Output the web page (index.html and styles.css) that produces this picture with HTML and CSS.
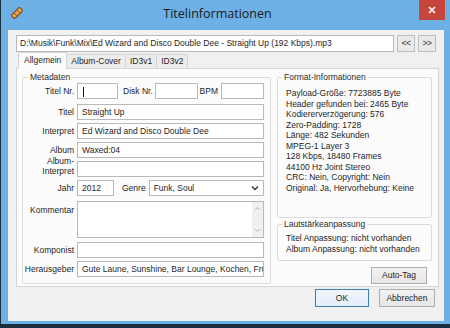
FILE: index.html
```html
<!DOCTYPE html>
<html lang="de">
<head>
    <meta charset="UTF-8">
    <title>Titelinformationen</title>
    <link rel="stylesheet" href="styles.css">
</head>
<body>

    <div class="window">
        <!-- Title bar -->
        <div class="titlebar">
            <svg class="app-icon" width="14" height="14" viewBox="0 0 14 14">
                <g transform="rotate(-45 7 7)">
                    <rect x="1" y="4.5" width="12" height="5" rx="1.5" fill="#f0a03c" stroke="#6b4a2a" stroke-width="1"/>
                    <line x1="5" y1="4.5" x2="5" y2="9.5" stroke="#6b4a2a" stroke-width="0.8"/>
                    <line x1="9" y1="4.5" x2="9" y2="9.5" stroke="#6b4a2a" stroke-width="0.8"/>
                </g>
            </svg>
            <div class="title">Titelinformationen</div>
            <div class="close-btn">
                <svg width="8" height="8" viewBox="0 0 8 8">
                    <path d="M1 1 L7 7 M7 1 L1 7" stroke="#fff" stroke-width="1.6"/>
                </svg>
            </div>
        </div>

        <!-- Client area -->
        <div class="client">
            <div class="path-row">
                <div class="field path">D:\Musik\Funk\Mix\Ed Wizard and Disco Double Dee - Straight Up (192 Kbps).mp3</div>
                <div class="nav-btn">&lt;&lt;</div>
                <div class="nav-btn">&gt;&gt;</div>
            </div>

            <div class="tabs">
                <div class="tab active">Allgemein</div>
                <div class="tab">Album-Cover</div>
                <div class="tab">ID3v1</div>
                <div class="tab">ID3v2</div>
            </div>

            <div class="tab-panel">
                <!-- Metadata -->
                <fieldset class="group meta">
                    <legend>Metadaten</legend>
                    <div class="form">
                        <div class="label">Titel Nr.</div>
                        <div class="row first">
                            <div class="field w-nr"><span class="caret"></span></div>
                            <div class="inline-label disk">Disk Nr.</div>
                            <div class="field w-small"></div>
                            <div class="inline-label bpm">BPM</div>
                            <div class="field w-small"></div>
                        </div>

                        <div class="label">Titel</div>
                        <div class="field">Straight Up</div>

                        <div class="label">Interpret</div>
                        <div class="field">Ed Wizard and Disco Double Dee</div>

                        <div class="label">Album</div>
                        <div class="field">Waxed:04</div>

                        <div class="label two-line">Album-<br>Interpret</div>
                        <div class="field"></div>

                        <div class="label">Jahr</div>
                        <div class="row">
                            <div class="field w-year">2012</div>
                            <div class="inline-label genre">Genre</div>
                            <div class="field select">
                                <span>Funk, Soul</span>
                                <svg width="8" height="6" viewBox="0 0 8 6">
                                    <path d="M1 1.5 L4 4.5 L7 1.5" fill="none" stroke="#333" stroke-width="1.4"/>
                                </svg>
                            </div>
                        </div>

                        <div class="label top">Kommentar</div>
                        <div class="field memo">
                            <div class="scrollbar">
                                <svg width="7" height="5" viewBox="0 0 7 5"><path d="M1 4 L3.5 1.5 L6 4" fill="none" stroke="#b5b5b5" stroke-width="1"/></svg>
                                <svg width="7" height="5" viewBox="0 0 7 5"><path d="M1 1 L3.5 3.5 L6 1" fill="none" stroke="#b5b5b5" stroke-width="1"/></svg>
                            </div>
                        </div>

                        <div class="label">Komponist</div>
                        <div class="field"></div>

                        <div class="label">Herausgeber</div>
                        <div class="field">Gute Laune, Sunshine, Bar Lounge, Kochen, Frühstück</div>
                    </div>
                </fieldset>

                <!-- Right column -->
                <div class="side">
                    <fieldset class="group format">
                        <legend>Format-Informationen</legend>
                        <div class="info">
                            <div>Payload-Größe: 7723885 Byte</div>
                            <div>Header gefunden bei: 2465 Byte</div>
                            <div>Kodiererverzögerung: 576</div>
                            <div>Zero-Padding: 1728</div>
                            <div>Länge: 482 Sekunden</div>
                            <div>MPEG-1 Layer 3</div>
                            <div>128 Kbps, 18480 Frames</div>
                            <div>44100 Hz Joint Stereo</div>
                            <div>CRC: Nein, Copyright: Nein</div>
                            <div>Original: Ja, Hervorhebung: Keine</div>
                        </div>
                    </fieldset>

                    <fieldset class="group gain">
                        <legend>Lautstärkeanpassung</legend>
                        <div class="info">
                            <div>Titel Anpassung: nicht vorhanden</div>
                            <div>Album Anpassung: nicht vorhanden</div>
                        </div>
                    </fieldset>

                    <div class="side-actions">
                        <div class="btn auto-tag">Auto-Tag</div>
                    </div>
                </div>
            </div>

            <div class="dialog-buttons">
                <div class="btn default">OK</div>
                <div class="btn">Abbrechen</div>
            </div>
        </div>
    </div>

</body>
</html>
```

FILE: styles.css
```css
/* General */
body {
    margin: 0;
    width: 450px;
    height: 328px;
    overflow: hidden;
    background: #1c2d40;
    font-family: "Liberation Sans", Arial, sans-serif;
    font-size: 8.5px;
    color: #1e1e1e;
}

.window {
    width: 449px;
    height: 324px;
    margin-left: 1px;
    padding: 0 6px 3px 7px;
    background: #6cb0e6;
    box-sizing: border-box;
}

/* Title bar */
.titlebar {
    height: 30px;
    display: flex;
    align-items: flex-start;
}

.app-icon {
    margin: 6px 0 0 2px;
}

.title {
    flex: 1;
    text-align: center;
    font-family: "Open Sans", "Noto Sans", sans-serif;
    font-size: 12.5px;
    line-height: 28px;
    color: #1b1b1b;
    padding-right: 8px;
}

.close-btn {
    width: 26px;
    height: 20px;
    background: #c7463c;
    display: flex;
    align-items: center;
    justify-content: center;
    margin-right: -1px;
}

/* Client area */
.client {
    height: 291px;
    background: #f0f0f0;
    padding: 5px 5px 0 8px;
    box-sizing: border-box;
}

.field {
    height: 16px;
    border: 1px solid #b9b9b9;
    background: #fff;
    box-sizing: border-box;
    padding: 0 4px;
    line-height: 14px;
    white-space: nowrap;
    overflow: hidden;
    flex-shrink: 0;
}

.path-row {
    display: flex;
    gap: 3px;
    padding-right: 3px;
    height: 17px;
}

.path-row .path {
    flex: 1;
    height: 17px;
    line-height: 15px;
    padding-left: 3px;
}

.nav-btn {
    width: 18px;
    height: 17px;
    box-sizing: border-box;
    border: 1px solid #bdbdbd;
    background: #e9e9e9;
    text-align: center;
    line-height: 15px;
    color: #333;
    letter-spacing: -0.5px;
}

/* Tabs */
.tabs {
    display: flex;
    height: 16px;
    padding-left: 2px;
    align-items: flex-end;
}

.tab {
    height: 14px;
    line-height: 13px;
    padding: 0 4px;
    border: 1px solid #d5d5d5;
    border-bottom: none;
    border-left: none;
    background: #ececec;
    box-sizing: border-box;
}

.tab.active {
    height: 17px;
    margin-bottom: -1px;
    background: #fcfcfc;
    border-left: 1px solid #d5d5d5;
    line-height: 15px;
    padding: 0 5px;
    position: relative;
    z-index: 1;
}

.tab-panel {
    height: 219px;
    border: 1px solid #d5d5d5;
    background: #fcfcfc;
    box-sizing: border-box;
    display: flex;
    gap: 6px;
    padding: 3px 4px 0 5px;
}

/* Group boxes */
.group {
    margin: 0;
    border: 1px solid #dcdcdc;
    border-radius: 2px;
    padding: 0;
    min-width: 0;
}

.group legend {
    padding: 0 2px;
    margin-left: 4px;
    line-height: 11px;
    color: #2a2a2a;
}

.meta {
    width: 249px;
    height: 212px;
    box-sizing: border-box;
    padding: 0 6px 0 1px;
}

.form {
    display: grid;
    grid-template-columns: 50px 1fr;
    column-gap: 3px;
    row-gap: 3px;
}

.label {
    text-align: right;
    line-height: 16px;
    white-space: nowrap;
}

.label.two-line {
    line-height: 10px;
    margin-top: -5px;
}

.label.top {
    line-height: 12px;
    padding-top: 5px;
}

.row {
    display: flex;
    align-items: center;
}

.row.first {
    margin-bottom: 2px;
}

.inline-label {
    white-space: nowrap;
}

.w-nr { width: 41px; }
.w-small { width: 43px; }
.w-year { width: 37px; }

.caret {
    display: inline-block;
    width: 1px;
    height: 10px;
    background: #111;
    vertical-align: middle;
    margin-left: 1px;
}

.inline-label.disk {
    margin: 0 2px 0 5px;
}

.inline-label.bpm {
    margin: 0 3px 0 auto;
}

.inline-label.genre {
    margin: 0 3px 0 8px;
}

.select {
    flex: 1;
    display: flex;
    align-items: center;
    justify-content: space-between;
    padding-right: 4px;
}

.memo {
    height: 37px;
    margin: 2px 0 1px;
    padding: 0;
    display: flex;
    justify-content: flex-end;
}

.scrollbar {
    width: 11px;
    background: #f0f0f0;
    display: flex;
    flex-direction: column;
    align-items: center;
    justify-content: space-between;
    padding: 4px 0;
    box-sizing: border-box;
}

/* Right column */
.side {
    width: 155px;
    display: flex;
    flex-direction: column;
}

.info {
    padding: 5px 0 0 8px;
    line-height: 10.5px;
    white-space: nowrap;
}

.format {
    height: 146px;
    box-sizing: border-box;
}

.gain {
    height: 42px;
    margin-top: 1px;
    box-sizing: border-box;
}

.gain .info {
    padding-top: 3px;
}

.side-actions {
    display: flex;
    justify-content: flex-end;
    padding: 6px 5px 0 0;
}

/* Buttons */
.btn {
    height: 18px;
    box-sizing: border-box;
    border: 1px solid #adadad;
    background: linear-gradient(#f2f2f2, #e6e6e6);
    text-align: center;
    line-height: 16px;
    color: #1e1e1e;
}

.auto-tag {
    width: 56px;
    height: 17px;
    line-height: 15px;
}

.dialog-buttons {
    display: flex;
    justify-content: flex-end;
    gap: 10px;
    padding: 2px 4px 0 0;
}

.dialog-buttons .btn {
    width: 56px;
}

.dialog-buttons .btn.default {
    width: 54px;
    border-color: #3c7fb1;
    background: linear-gradient(#f1f6fb, #e4eef8);
}
```
